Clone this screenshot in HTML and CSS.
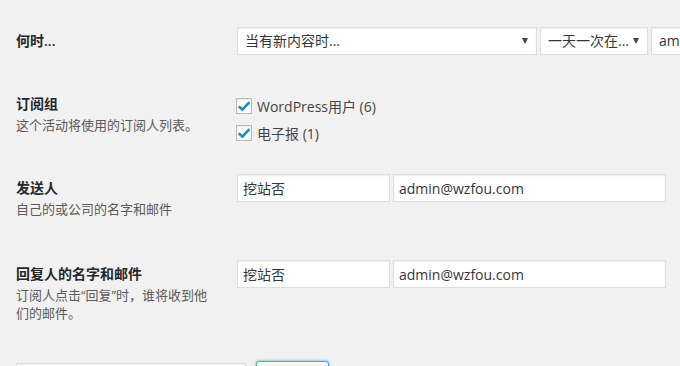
FILE: index.html
```html
<!DOCTYPE html>
<html lang="zh-CN">
<head>
  <meta charset="UTF-8" />
  <meta name="viewport" content="width=device-width, initial-scale=1.0" />
  <title>新建活动</title>
  <link rel="stylesheet" href="styles.css">
</head>
<body>
  <div class="wrap">
    <!-- 何时 -->
    <div class="form-row">
      <div class="form-label">
        <h3 class="label-title">何时...</h3>
      </div>
      <div class="form-field">
        <span class="select-wrap">
          <select class="select select-wide">
            <option>当有新内容时...</option>
          </select>
        </span>
        <span class="select-wrap">
          <select class="select select-mid">
            <option>一天一次在...</option>
          </select>
        </span>
        <span class="select-wrap">
          <select class="select select-time">
            <option>am1:00</option>
          </select>
        </span>
      </div>
    </div>

    <!-- 订阅组 -->
    <div class="form-row">
      <div class="form-label">
        <h3 class="label-title">订阅组</h3>
        <p class="description">这个活动将使用的订阅人列表。</p>
      </div>
      <div class="form-field">
        <div class="check-list">
          <label class="check-item">
            <span class="checkbox">
              <svg viewBox="0 0 16 16" width="16" height="16"><path d="M2.8 8.2 L6.4 11.6 L13.4 4.2" fill="none" stroke="#1e8cbe" stroke-width="2.6"/></svg>
            </span>
            WordPress用户 (6)
          </label>
          <label class="check-item">
            <span class="checkbox">
              <svg viewBox="0 0 16 16" width="16" height="16"><path d="M2.8 8.2 L6.4 11.6 L13.4 4.2" fill="none" stroke="#1e8cbe" stroke-width="2.6"/></svg>
            </span>
            电子报 (1)
          </label>
        </div>
      </div>
    </div>

    <!-- 发送人 -->
    <div class="form-row form-row-sender">
      <div class="form-label">
        <h3 class="label-title">发送人</h3>
        <p class="description">自己的或公司的名字和邮件</p>
      </div>
      <div class="form-field">
        <input type="text" class="text-input input-name" value="挖站否">
        <input type="text" class="text-input input-email" value="admin@wzfou.com">
      </div>
    </div>

    <!-- 回复人 -->
    <div class="form-row">
      <div class="form-label">
        <h3 class="label-title">回复人的名字和邮件</h3>
        <p class="description">订阅人点击“回复”时，谁将收到他们的邮件。</p>
      </div>
      <div class="form-field">
        <input type="text" class="text-input input-name" value="挖站否">
        <input type="text" class="text-input input-email" value="admin@wzfou.com">
      </div>
    </div>

    <!-- 测试发送 -->
    <div class="test-row">
      <input type="text" class="text-input input-test" value="" aria-label="测试邮箱">
      <button class="button" aria-label="发送测试"></button>
    </div>
  </div>
</body>
</html>
```

FILE: styles.css
```css
:root {
  --background: #f1f1f1;
  --heading: #23282d;
  --text-color: #32373c;
  --muted: #5a5a5a;
  --border: #ddd;
  --blue: #1e8cbe;
}
html {
  overflow: hidden;
}
body {
  margin: 0;
  background-color: var(--background);
  color: #444;
  font-family: "Open Sans", "Noto Sans CJK SC", sans-serif;
  font-size: 13px;
}
.wrap {
  padding: 12px 0 0 16px;
}

/* Form rows (label column + field column) */
.form-row {
  display: flex;
  align-items: flex-start;
}
.form-label {
  width: 200px;
  flex: none;
  padding: 20px 10px 25px 0;
}
.form-row-sender .form-label {
  padding-bottom: 27px;
}
.label-title {
  margin: 0;
  font-size: 14px;
  font-weight: 600;
  line-height: 18px;
  color: var(--heading);
}
.description {
  margin: 3px 0 0;
  font-size: 13px;
  line-height: 18px;
  color: var(--muted);
}
.form-field {
  display: flex;
  gap: 1px;
  padding: 14px 0 0 10px;
  white-space: nowrap;
}

/* Selects */
.select-wrap {
  position: relative;
  margin: 1px;
  flex: none;
}
.select-wrap::after {
  content: "";
  position: absolute;
  right: 9px;
  top: 11px;
  border-left: 3.5px solid transparent;
  border-right: 3.5px solid transparent;
  border-top: 6px solid #444;
  pointer-events: none;
}
.select {
  appearance: none;
  -webkit-appearance: none;
  display: block;
  height: 28px;
  margin: 0;
  padding: 0 16px 0 7px;
  border: 1px solid var(--border);
  border-radius: 0;
  box-shadow: inset 0 1px 2px rgba(0, 0, 0, 0.07);
  background-color: #fff;
  color: var(--text-color);
  font-family: "Open Sans", "Noto Sans CJK SC", sans-serif;
  font-size: 14px;
  line-height: 26px;
}
.select-wide { width: 300px; }
.select-mid { width: 108px; }
.select-time { width: 100px; }

/* Checkboxes */
.check-list {
  display: flex;
  flex-direction: column;
  gap: 11px;
  margin-top: 9px;
}
.check-item {
  display: flex;
  align-items: center;
  height: 16px;
  font-size: 14px;
  color: #444;
}
.checkbox {
  width: 14px;
  height: 14px;
  margin-right: 5px;
  border: 1px solid #b4b9be;
  background-color: #fff;
  box-shadow: inset 0 1px 2px rgba(0, 0, 0, 0.1);
  position: relative;
}
.checkbox svg {
  position: absolute;
  left: -1px;
  top: -1px;
}

/* Text inputs */
.text-input {
  box-sizing: border-box;
  height: 28px;
  margin: 1px;
  padding: 0 5px;
  border: 1px solid var(--border);
  box-shadow: inset 0 1px 2px rgba(0, 0, 0, 0.07);
  background-color: #fff;
  color: var(--text-color);
  font-family: "Open Sans", "Noto Sans CJK SC", sans-serif;
  font-size: 14px;
  outline: none;
}
.input-name { width: 153px; }
.input-email { width: 273px; }

/* Test send row */
.test-row {
  display: flex;
  align-items: flex-start;
  gap: 10px;
  padding-top: 14px;
}
.input-test {
  width: 230px;
  margin: 2px 0 0;
}
.button {
  width: 73px;
  height: 28px;
  border: 1px solid #5b9dd9;
  border-radius: 3px;
  background-color: #f7f7f7;
  box-shadow: 0 0 3px rgba(0, 115, 170, 0.6);
  color: #555;
  font-family: "Open Sans", "Noto Sans CJK SC", sans-serif;
  font-size: 13px;
}
```
